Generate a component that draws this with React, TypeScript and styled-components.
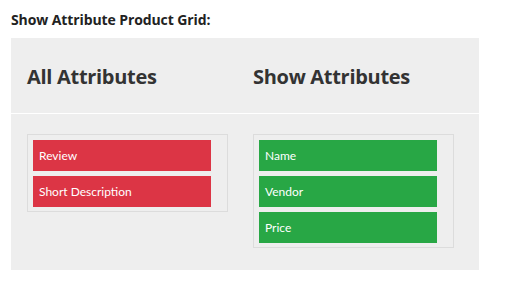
import React from 'react';
import styled, { createGlobalStyle } from 'styled-components';

const GlobalStyle = createGlobalStyle`
  body {
    margin: 0;
    background: #fff;
    font-family: Lato, "Noto Sans", sans-serif;
  }
`;

const Wrap = styled.div`
  padding: 11px 11px 10px;
  width: 468px;
`;

const Title = styled.div`
  font-family: "Open Sans", sans-serif;
  font-size: 14px;
  font-weight: 700;
  color: #222;
  line-height: 18px;
  margin-bottom: 9px;
  letter-spacing: -0.1px;
`;

const Panel = styled.div`
  background: #eeeeee;
  padding-bottom: 22px;
`;

const Header = styled.div`
  display: grid;
  grid-template-columns: 226px 1fr;
  padding: 0 16px;
  height: 75px;
  align-items: center;
  border-bottom: 1px solid #fff;
`;

const Heading = styled.h2`
  margin: 0;
  font-family: "Open Sans", sans-serif;
  font-size: 20px;
  font-weight: 700;
  color: #333;
  letter-spacing: -0.3px;
  padding-top: 2px;
`;

const Body = styled.div`
  display: grid;
  grid-template-columns: 226px 1fr;
  align-items: start;
  padding: 20px 16px 0;
`;

const ListBox = styled.div`
  width: 188px;
  border: 1px solid #dcdcdc;
  padding: 5px 6px 4px 5px;
  display: flex;
  flex-direction: column;
  gap: 5px;
`;

const Item = styled.div<{ $tone: 'red' | 'green' }>`
  width: 178px;
  height: 31px;
  box-sizing: border-box;
  padding: 0 6px;
  display: flex;
  align-items: center;
  font-size: 12px;
  color: #fff;
  background: ${({ $tone }) => ($tone === 'red' ? '#dc3545' : '#28a745')};
`;

const all = ['Review', 'Short Description'];
const shown = ['Name', 'Vendor', 'Price'];

export default function App() {
  return (
    <>
      <GlobalStyle />
      <Wrap>
        <Title>Show Attribute Product Grid:</Title>
        <Panel>
          <Header>
            <Heading>All Attributes</Heading>
            <Heading>Show Attributes</Heading>
          </Header>
          <Body>
            <ListBox>
              {all.map((a) => (
                <Item key={a} $tone="red">{a}</Item>
              ))}
            </ListBox>
            <ListBox>
              {shown.map((a) => (
                <Item key={a} $tone="green">{a}</Item>
              ))}
            </ListBox>
          </Body>
        </Panel>
      </Wrap>
    </>
  );
}
